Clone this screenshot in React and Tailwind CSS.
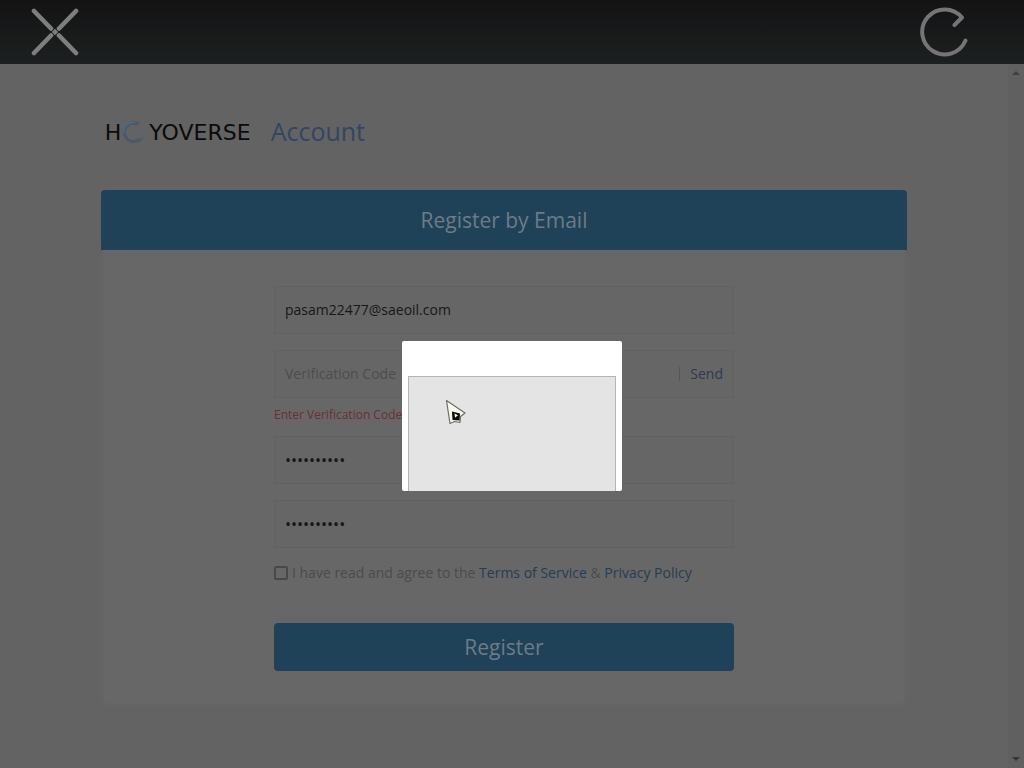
import React, { useState } from 'react';

const CloseIcon = () => (
    <svg viewBox="0 0 48 48" className="w-12 h-12" fill="none" stroke="#7d7e7d" strokeWidth="4.600" strokeLinecap="round">
        <path d="M3 3 20 20.500M45 3 28 20.500M3 45 20 27.500M45 45 28 27.500" />
        <path d="M24 20.800 27.200 24 24 27.200 20.800 24Z" fill="#7d7e7d" stroke="none" />
    </svg>
);

const ReloadIcon = () => (
    <svg viewBox="0 0 50 50" className="w-[50px] h-[50px]" fill="none" stroke="#747574" strokeWidth="4" strokeLinecap="round" strokeLinejoin="round">
        <path d="M46.500 33.500A22.500 22.500 0 1 1 43 10.500L35.500 18" />
    </svg>
);

const RingMark = () => (
    <svg viewBox="0 0 24 24" className="w-6 h-6" fill="none" strokeLinecap="round">
        <path d="M18 3A10 10 0 1 0 21 18.500" stroke="#4d5b70" strokeWidth="2" />
        <path d="M15.500 4A9 9 0 1 0 17 20" stroke="#4a586d" strokeWidth="3" />
        <path d="M14 2.500A9.500 9.500 0 0 0 3 13" stroke="#556c86" strokeWidth="1.200" />
    </svg>
);

const Cursor = () => (
    <svg viewBox="0 0 22 26" className="absolute left-9 top-[22px] w-[22px] h-[26px]">
        <path d="M1.500 1.500 20 14 15.500 17.500 15 23.500 9.500 22.500 5 24.500Z" fill="#f7f8ee" stroke="#6d6d66" strokeWidth="1.200" strokeLinejoin="round" />
        <path d="M7 12.500 15 14.500 14.500 21.500 7.500 21Z" fill="#0d0d0b" />
        <path d="M9.500 14.500 13 16.200 10 18.800Z" fill="#f7f8ee" />
    </svg>
);

const Field = ({ label, error, type = 'text', children, ...props }) => (
    <div>
        <div className="flex items-center h-12 px-[10px] border border-[#606162] bg-[#666666]">
            <input
                aria-label={label}
                type={type}
                className={`flex-1 min-w-0 h-full pb-px bg-transparent outline-none text-[#171717] placeholder:text-[#4d4d4d] ${type === 'password' ? 'text-[16px]' : 'text-[14px]'}`}
                {...props}
            />
            {children}
        </div>
        {error && <div className="h-[38px] flex items-center pb-1 text-[12px] text-[#6a2f36]">{error}</div>}
    </div>
);

const TopBar = () => (
    <header className="h-16 px-[31px] flex items-center justify-between bg-linear-to-b from-[#131314] to-[#1d2020]">
        <button type="button" aria-label="Close"><CloseIcon /></button>
        <button type="button" aria-label="Reload" className="mr-6"><ReloadIcon /></button>
    </header>
);

const ScrollRail = () => (
    <div className="w-4 flex flex-col items-center justify-between py-[6px] bg-[#606060]">
        <svg viewBox="0 0 8 6" className="w-2 h-[6px]"><path d="M4 1 8 5H0Z" fill="#404040" /></svg>
        <svg viewBox="0 0 8 6" className="w-2 h-[6px]"><path d="M4 5 8 1H0Z" fill="#353535" /></svg>
    </div>
);

const App = () => {
    const [email, setEmail] = useState('pasam22477@saeoil.com');
    const [code, setCode] = useState('');
    const [password, setPassword] = useState('qwerty1234');
    const [confirm, setConfirm] = useState('qwerty1234');
    const [agreed, setAgreed] = useState(false);

    return (
        <div className="min-h-screen flex flex-col bg-[#636363] font-['Open_Sans','Noto_Sans',sans-serif]">
            <TopBar />
            <div className="relative flex-1 flex">
                <main className="flex-1 pt-[50px] pb-14">
                    <div className="w-4/5 mx-auto">
                        <h1 className="flex items-center h-9 pl-1">
                            <span className="flex items-center font-['DejaVu_Sans',sans-serif] font-normal text-[22px] text-[#0b0b0b]">
                                H<RingMark /><span className="ml-1">YOVERSE</span>
                            </span>
                            <span className="ml-5 text-[25px] text-[#344560]">Account</span>
                        </h1>
                        <div className="mt-10">
                            <h2 className="relative h-[60px] pt-px rounded-t-sm flex items-center justify-center bg-[#1f4259] text-[21px] text-[#6d7b86]">
                                Register by Email
                            </h2>
                            <div className="mx-[3px] pt-9 pb-8 bg-[#676767] shadow-[0_0_8px_#686868]">
                                <form className="w-full max-w-[460px] mx-auto" onSubmit={(e) => e.preventDefault()}>
                                    <div className="flex flex-col gap-4">
                                        <Field label="Email" type="email" value={email} onChange={(e) => setEmail(e.target.value)} />
                                        <div className="-mb-4">
                                            <Field
                                                label="Verification Code"
                                                placeholder="Verification Code"
                                                error="Enter Verification Code"
                                                value={code}
                                                onChange={(e) => setCode(e.target.value)}
                                            >
                                                <button type="button" className="pl-[10px] border-l border-[#555555] text-[14px] leading-[14px] text-[#2c3b50]">Send</button>
                                            </Field>
                                        </div>
                                        <Field label="Password" type="password" value={password} onChange={(e) => setPassword(e.target.value)} />
                                        <Field label="Confirm password" type="password" value={confirm} onChange={(e) => setConfirm(e.target.value)} />
                                    </div>
                                    <div className="mt-[14px] flex items-center gap-1 text-[14px] leading-[22px] text-[#4b4b4b]">
                                        <input
                                            id="agree"
                                            type="checkbox"
                                            checked={agreed}
                                            onChange={(e) => setAgreed(e.target.checked)}
                                            className="appearance-none w-[14px] h-[14px] border-2 border-[#484848] rounded-xs checked:bg-[#1f4a63]"
                                        />
                                        <div>
                                            <label htmlFor="agree">I have read and agree to the</label>{' '}
                                            <a href="#terms" className="text-[#263c55]">Terms of Service</a> &amp;{' '}
                                            <a href="#privacy" className="text-[#263c55]">Privacy Policy</a>
                                        </div>
                                    </div>
                                    <button type="submit" className="mt-[39px] w-full h-12 pt-px rounded-sm bg-[#1f4259] text-[21px] text-[#6d7b86]">
                                        Register
                                    </button>
                                </form>
                            </div>
                        </div>
                    </div>
                </main>
                <ScrollRail />

                <div className="absolute inset-0 flex items-center justify-center">
                    <div role="dialog" aria-label="Verification" className="w-[220px] h-[150px] px-[6px] pt-[35px] rounded-xs bg-white overflow-hidden flex">
                        <div className="relative flex-1 border border-b-0 border-[#b5b5b5] bg-[#e4e4e4]">
                            <Cursor />
                        </div>
                    </div>
                </div>
            </div>
        </div>
    );
};

export default App;
